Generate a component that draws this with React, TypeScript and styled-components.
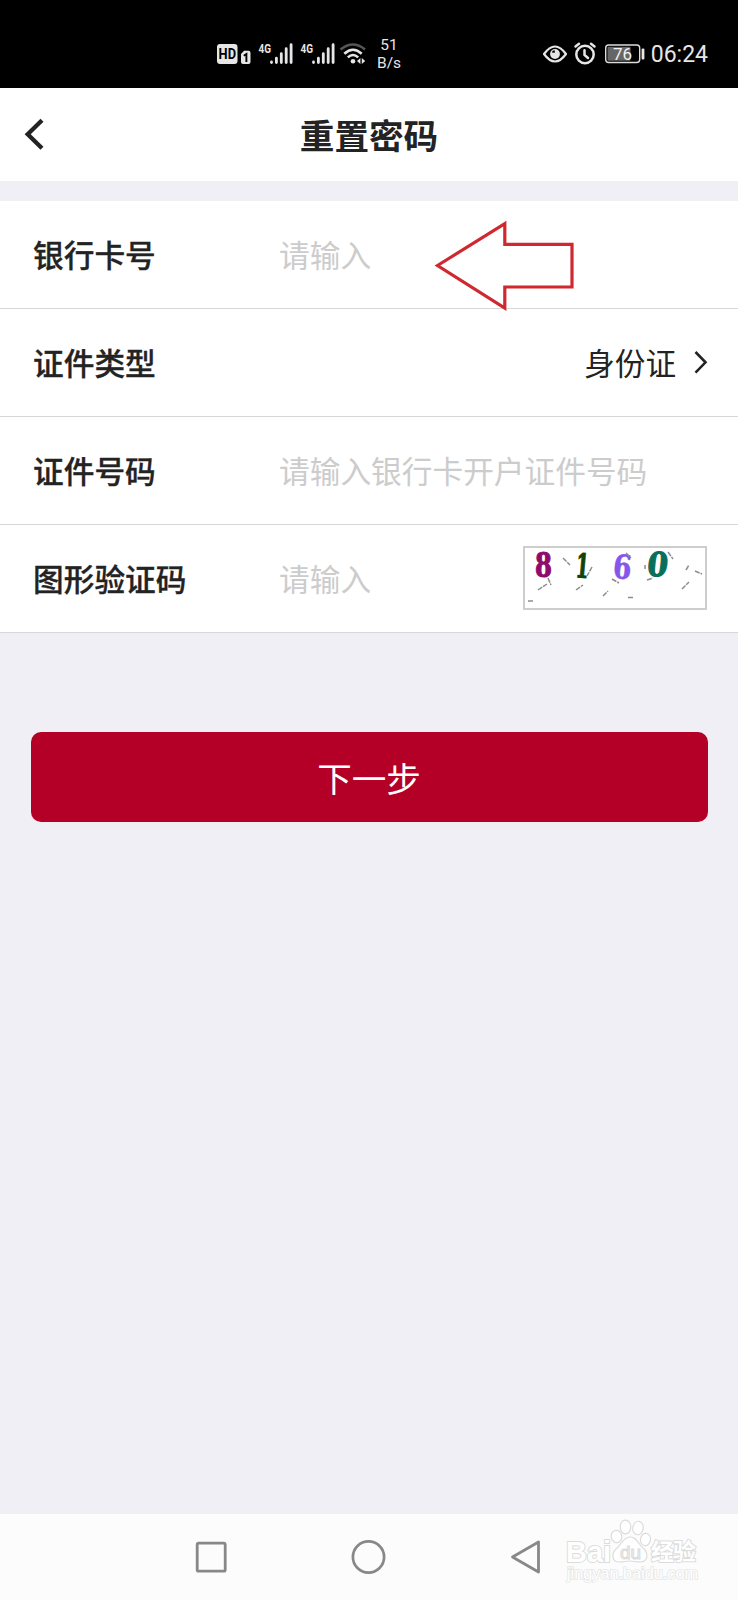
import React from 'react';
import styled, { createGlobalStyle } from 'styled-components';

const cjk = `'Noto Sans CJK SC', sans-serif`;

const GlobalStyle = createGlobalStyle`
  * { box-sizing: border-box; }
  body { margin: 0; background: #efeff5; font-family: ${cjk}; color: #232323; }
  svg { display: block; flex: none; overflow: visible; }
`;

const Screen = styled.main`
  width: 100%;
  height: 1600px;
  display: flex;
  flex-direction: column;
  background: #efeff5;
  overflow: hidden;
`;

const StatusBar = styled.header`
  height: 88px;
  flex: none;
  padding: 19px 30px 0 216px;
  display: flex;
  align-items: center;
  justify-content: space-between;
  background: #000;
  color: #e6e6e6;
  font-family: Roboto, sans-serif;
`;

const StatusGroup = styled.div`
  display: flex;
  align-items: center;
`;

const NetSpeed = styled.div`
  width: 30px;
  margin-left: 7px;
  font-size: 15.5px;
  line-height: 18px;
  text-align: center;
`;

const Clock = styled.time`
  margin-left: 5px;
  padding-top: 2px;
  font-size: 23px;
  line-height: 28px;
`;

const TitleBar = styled.div`
  position: relative;
  height: 93px;
  flex: none;
  display: flex;
  align-items: center;
  justify-content: center;
  background: #fff;
`;

const Title = styled.h1`
  margin: 0;
  padding-bottom: 2px;
  font-size: 34.6px;
  line-height: 50px;
  font-weight: 700;
`;

const BackButton = styled.button`
  position: absolute;
  left: 14px;
  top: 22px;
  padding: 8px;
  border: 0;
  background: none;
`;

const Form = styled.form`
  margin-top: 20px;
  display: flex;
  flex-direction: column;
`;

const Row = styled.div`
  position: relative;
  height: 108px;
  flex: none;
  display: flex;
  align-items: center;
  padding: 0 30px 2px 33px;
  background: #fff;
  border-bottom: 1px solid #d7d7d9;
`;

const Label = styled.label`
  width: 246px;
  flex: none;
  font-size: 30.7px;
  line-height: 44px;
  font-weight: 500;
  -webkit-text-stroke: 0.3px #232323;
`;

const Hint = styled.span`
  flex: 1;
  font-size: 30.7px;
  line-height: 44px;
  color: #cccccc;
  white-space: nowrap;
`;

const Choice = styled.span`
  margin-left: auto;
  margin-right: 18px;
  font-size: 30.6px;
  line-height: 44px;
`;

const Captcha = styled.div`
  width: 184px;
  height: 64px;
  flex: none;
  margin-right: 1px;
  border: 2px solid #cdcdcd;
  background: #fff;
`;

const ArrowMark = styled.svg`
  position: absolute;
  left: 430px;
  top: 14px;
  z-index: 1;
`;

const NextButton = styled.button`
  margin: 99px 30.5px 0;
  height: 90px;
  padding: 0;
  border: 0;
  border-radius: 10px;
  background: #b40026;
  color: #fff;
  font-family: ${cjk};
  font-size: 34.6px;
  line-height: 50px;
`;

const NavBar = styled.nav`
  position: relative;
  height: 86px;
  flex: none;
  margin-top: auto;
  padding: 0 196px 0 194px;
  display: flex;
  align-items: center;
  justify-content: space-between;
  background: #fcfcfc;
`;

const Watermark = styled.svg`
  position: absolute;
  left: 560px;
  top: 0;
`;

const HdIcon = () => (
  <svg width="36" height="24" viewBox="0 0 36 24">
    <rect x="1" y="2" width="20.5" height="20" rx="3" fill="#e6e6e6" />
    <text x="2.600" y="17.300" textLength="17.400" lengthAdjust="spacingAndGlyphs" fontFamily="Roboto" fontWeight="700" fontSize="15" fill="#000">HD</text>
    <path d="M25 12l3-3.200h4.500q2 0 2 2v9.200q0 2-2 2h-5.500q-2 0-2-2z" fill="#e6e6e6" />
    <path d="M27.800 13.800l2.600-1.800v8" fill="none" stroke="#000" strokeWidth="1.900" />
  </svg>
);

const SignalIcon = () => (
  <svg width="42" height="24" viewBox="0 0 42 24">
    <text x="6.500" y="10.600" textLength="12.500" lengthAdjust="spacingAndGlyphs" fontFamily="Roboto" fontWeight="700" fontSize="13" fill="#e6e6e6">4G</text>
    <g stroke="#e6e6e6" strokeWidth="2.800" strokeLinecap="round">
      <path d="M19.500 20V20.600M24.400 16.200V20.600M29.300 11.700V20.600M34.200 6.700V20.600M39.100 2.700V20.600" />
    </g>
  </svg>
);

const WifiIcon = () => (
  <svg width="31" height="24" viewBox="-3 0 31 24">
    <g fill="none" strokeWidth="2.600">
      <path d="M1.500 7.500Q14-2.500 26 7.500" stroke="#555" />
      <path d="M5.300 11.800Q14 3.700 22.700 11.800M8.800 15.400Q14 10.600 19.200 15.400" stroke="#e6e6e6" />
    </g>
    <circle cx="14" cy="19.300" r="2.300" fill="#e6e6e6" />
    <path d="M21.400 16v6l-3.400-3zM22.800 16v6l3.400-3z" fill="#e6e6e6" />
  </svg>
);

const EyeIcon = () => (
  <svg width="26" height="24" viewBox="0 0 26 24">
    <path d="M2 12Q13-3 24 12Q13 27 2 12z" fill="none" stroke="#e6e6e6" strokeWidth="2.200" strokeLinejoin="round" />
    <circle cx="13" cy="12" r="4.900" fill="#e6e6e6" />
    <path d="M9.800 10.500q.7-2.300 2.800-2.200l.3 2.400z" fill="#000" />
  </svg>
);

const AlarmIcon = () => (
  <svg width="24" height="24" viewBox="0 0 24 24">
    <g fill="none" stroke="#e6e6e6" strokeWidth="2.500" strokeLinecap="round">
      <circle cx="12" cy="12.500" r="8.700" />
      <path d="M11.500 8.200v4.800l3.500 3M2.500 4.500l3.500-2.700M21.500 4.500l-3.500-2.700" />
    </g>
  </svg>
);

const BatteryIcon = () => (
  <svg width="42" height="24" viewBox="0 0 42 24">
    <rect x="1.700" y="3" width="34" height="17.500" rx="3" fill="none" stroke="#dcdcdc" strokeWidth="1.400" />
    <rect x="3.500" y="4.800" width="23" height="14" rx="1" fill="#666" />
    <rect x="37.600" y="6.500" width="2.800" height="11" rx="1" fill="#e6e6e6" />
    <text x="18.500" y="18" textAnchor="middle" fontFamily="Roboto" fontSize="17" fill="#f2f2f2">76</text>
  </svg>
);

const CaptchaPicture = () => (
  <svg width="180" height="60" viewBox="0 0 180 60">
    <g fontFamily="DejaVu Serif" fontWeight="700" fontSize="33" textAnchor="middle" strokeWidth="1.200">
      <text transform="translate(18.500 29) scale(.74 1)" fill="#900a6c" stroke="#900a6c">8</text>
      <text transform="translate(56.500 29.500) rotate(5) scale(.56 1)" fill="#0f4406" stroke="#0f4406">1</text>
      <text transform="translate(96.500 30.500) rotate(5) scale(.8 1)" fill="#8555ec" stroke="#8555ec" strokeWidth=".6">6</text>
      <text transform="translate(131.500 28) skewX(-6) scale(.9 1)" fill="#08705a" stroke="#08705a">0</text>
    </g>
    <g fill="none" stroke="#8d8d8d" strokeWidth="1.500" strokeDasharray="5 1">
      <path d="M3 53h6M13 42l9-6M23 30l3 7M38 10l7 7M51 42l7-5M67 19l-5 9M78 48l5-5M87 31l7 4M101 5l5 5M103 49.500h5M120 17v4M122 32l6-2M143 4l5 7M161 22l3-5M170 23l7 3M157 41l7-7" />
    </g>
  </svg>
);

export default function App() {
  return (
    <Screen>
      <GlobalStyle />
      <StatusBar>
        <StatusGroup>
          <HdIcon />
          <SignalIcon />
          <SignalIcon />
          <WifiIcon />
          <NetSpeed>51<br />B/s</NetSpeed>
        </StatusGroup>
        <StatusGroup>
          <EyeIcon />
          <svg width="5" height="24" />
          <AlarmIcon />
          <svg width="7" height="24" />
          <BatteryIcon />
          <Clock>06:24</Clock>
        </StatusGroup>
      </StatusBar>
      <TitleBar>
        <BackButton type="button" aria-label="返回">
          <svg width="26" height="32" viewBox="0 0 26 32">
            <path d="M20 2.300L5.700 16.300l14.300 14" fill="none" stroke="#232323" strokeWidth="4.300" />
          </svg>
        </BackButton>
        <Title>重置密码</Title>
      </TitleBar>
      <Form>
        <Row>
          <Label>银行卡号</Label>
          <Hint>请输入</Hint>
          <ArrowMark width="150" height="100" viewBox="0 0 150 100">
            <path d="M7.500 50.500L74.800 8.700V29.300H142V72H74.800V93z" fill="none" stroke="#d0282f" strokeWidth="3.200" />
          </ArrowMark>
        </Row>
        <Row>
          <Label>证件类型</Label>
          <Choice>身份证</Choice>
          <svg width="14" height="24" viewBox="0 0 14 24">
            <path d="M1.500 2l10 10.300-10 10.300" fill="none" stroke="#232323" strokeWidth="2.600" />
          </svg>
        </Row>
        <Row>
          <Label>证件号码</Label>
          <Hint>请输入银行卡开户证件号码</Hint>
        </Row>
        <Row>
          <Label>图形验证码</Label>
          <Hint>请输入</Hint>
          <Captcha><CaptchaPicture /></Captcha>
        </Row>
        <NextButton type="button">下一步</NextButton>
      </Form>
      <NavBar>
        <svg width="34" height="34" viewBox="0 0 34 34">
          <rect x="3.200" y="3.200" width="28" height="28" rx="1.500" fill="none" stroke="#888" strokeWidth="2.800" />
        </svg>
        <svg width="36" height="36" viewBox="0 0 36 36">
          <circle cx="17.500" cy="18" r="15.600" fill="none" stroke="#888" strokeWidth="2.700" />
        </svg>
        <svg width="32" height="36" viewBox="0 0 32 36">
          <path d="M2.500 18L28.500 3V33z" fill="none" stroke="#888" strokeWidth="2.800" strokeLinejoin="round" />
        </svg>
        <Watermark width="150" height="86" viewBox="0 0 150 86">
          <g fill="#fff" stroke="#dcdcdc" strokeWidth="1.200">
            <ellipse cx="56.500" cy="22.500" rx="5.300" ry="6.200" transform="rotate(-10 56.500 22.500)" />
            <ellipse cx="65.500" cy="13" rx="5.300" ry="6.800" />
            <ellipse cx="78" cy="14" rx="5.200" ry="6.800" transform="rotate(10 78 14)" />
            <ellipse cx="85.500" cy="25.500" rx="5" ry="6.200" transform="rotate(10 85.500 25.500)" />
            <path d="M70 23c7 0 8 7 13 11 6 5 5 14-3 14-4 0-6-1-10-1s-7 1-11 1c-7 0-8-8-3-13 5-4 7-12 14-12z" />
            <text x="6" y="47.500" textLength="45" lengthAdjust="spacingAndGlyphs" fontFamily="Liberation Sans" fontWeight="700" fontSize="30" paintOrder="stroke" strokeWidth="2">Bai</text>
            <text x="60" y="44.500" textLength="21" lengthAdjust="spacingAndGlyphs" fontFamily="Liberation Sans" fontSize="19">du</text>
            <text x="91" y="46" textLength="45" fontFamily="Noto Sans CJK SC" fontWeight="700" fontSize="23" paintOrder="stroke" strokeWidth="2">经验</text>
            <text x="7" y="65" textLength="131" lengthAdjust="spacingAndGlyphs" fontFamily="Liberation Sans" fontSize="16.500" paintOrder="stroke" stroke="#e6e6e6" strokeWidth="1.600">jingyan.baidu.com</text>
          </g>
        </Watermark>
      </NavBar>
    </Screen>
  );
}
